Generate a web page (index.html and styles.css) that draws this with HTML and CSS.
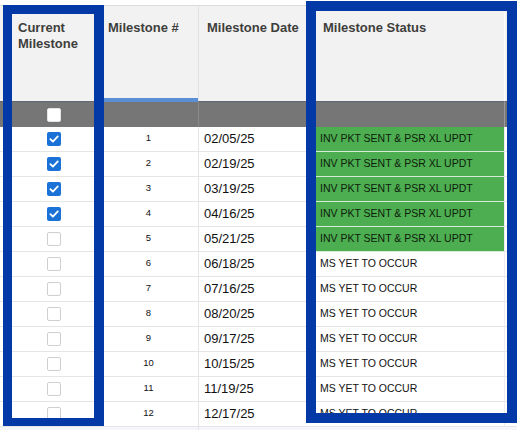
FILE: index.html
```html
<!DOCTYPE html>
<html>
<head>
<meta charset="utf-8">
<link rel="stylesheet" href="styles.css">
</head>
<body>
<div class="page">
  <div class="grid">
    <div class="hd c1">Current Milestone</div>
    <div class="hd c2 sorted">Milestone #</div>
    <div class="hd c3">Milestone Date</div>
    <div class="hd c4">Milestone Status</div>
    <div class="hd c5"></div>

    <div class="ft c1"><span class="cb blank"></span></div>
    <div class="ft c2 sorted"></div>
    <div class="ft c3"></div>
    <div class="ft c4"></div>
    <div class="ft c5"></div>
  </div>
  <div class="grid" id="rows"></div>
</div>
<div class="frame frame-left"></div>
<div class="frame frame-right"></div>
<script src="app.js"></script>
</body>
</html>
```
FILE: app.js
```js
const data = [
  [true, 1, "02/05/25", "INV PKT SENT & PSR XL UPDT", true],
  [true, 2, "02/19/25", "INV PKT SENT & PSR XL UPDT", true],
  [true, 3, "03/19/25", "INV PKT SENT & PSR XL UPDT", true],
  [true, 4, "04/16/25", "INV PKT SENT & PSR XL UPDT", true],
  [false, 5, "05/21/25", "INV PKT SENT & PSR XL UPDT", true],
  [false, 6, "06/18/25", "MS YET TO OCCUR", false],
  [false, 7, "07/16/25", "MS YET TO OCCUR", false],
  [false, 8, "08/20/25", "MS YET TO OCCUR", false],
  [false, 9, "09/17/25", "MS YET TO OCCUR", false],
  [false, 10, "10/15/25", "MS YET TO OCCUR", false],
  [false, 11, "11/19/25", "MS YET TO OCCUR", false],
  [false, 12, "12/17/25", "MS YET TO OCCUR", false]
];
const rows = document.getElementById("rows");
const check = '<svg viewBox="0 0 14 14" width="14" height="14"><path d="M3.4 7.2 L5.9 9.6 L10.8 4.4" fill="none" stroke="#fff" stroke-width="1.8" stroke-linecap="round" stroke-linejoin="round"/></svg>';
let html = "";
for (const [on, n, d, s, g] of data) {
  html += '<div class="td c1"><span class="cb ' + (on ? "on" : "off") + '">' + (on ? check : "") + '</span></div>';
  html += '<div class="td c2 num">' + n + '</div>';
  html += '<div class="td c3 date">' + d + '</div>';
  html += '<div class="td c4 status' + (g ? " green" : "") + '">' + s.replace(/&/g, "&amp;") + '</div>';
  html += '<div class="td c5"></div>';
}
html += '<div class="tail"></div><div class="tail"></div><div class="tail c3"></div><div class="tail"></div><div class="tail"></div>';
rows.innerHTML = html;
```
FILE: styles.css
```css
* { box-sizing: border-box; }
html, body { margin: 0; padding: 0; background: #fff; }
body {
  width: 517px;
  height: 430px;
  overflow: hidden;
  position: relative;
  font-family: "Liberation Sans", Arial, sans-serif;
  color: #181818;
}
.page { padding-top: 5px; }
.grid {
  display: grid;
  grid-template-columns: 99px 99px 115px 191px 13px;
}
.hd {
  height: 96px;
  background: #f3f2f2;
  border-top: 1px solid #dddbda;
  padding: 14px 9px 0 9px;
  font-weight: bold;
  font-size: 13px;
  line-height: 16px;
  color: #3e3e3c;
}
.hd.c1 { padding-left: 18px; padding-right: 4px; }
.hd.c4 { padding-left: 10px; }
.hd.c3 { border-left: 1px solid #e2e2e2; padding-left: 8px; }
.hd.c5 { border-left: 1px solid #fff; padding: 0; }
.hd.sorted { box-shadow: inset 0 -3px 0 #5b8fd3; }
.ft {
  height: 26px;
  background: #767676;
  border-top: 1px solid #5f6774;
  display: flex;
  align-items: center;
}
.ft.sorted { border-top-color: #5b8fd3; }
.ft.c3 { border-left: 1px solid #8a8a8a; }
.ft.c5 { border-left: 1px solid #9a9a9a; }
.ft.c1 { justify-content: center; padding-left: 9px; }
.cb {
  width: 14px;
  height: 14px;
  border-radius: 2px;
  display: block;
}
.cb svg { display: block; }
.cb.blank { background: #fff; border: 1px solid #e4e4e4; }
.cb.on { background: #1b72d6; }
.cb.off { background: #fff; border: 1px solid #cfcfcf; }
.td {
  height: 25px;
  border-bottom: 1px solid #e5e5e5;
  display: flex;
  align-items: center;
  background: #fff;
}
.td.c1 { justify-content: center; padding-left: 9px; }
.td.c3 { border-left: 1px solid #e5e5e5; }
.num {
  justify-content: center;
  font-size: 9.5px;
  padding-bottom: 3px;
  color: #111;
}
.date {
  font-size: 13px;
  padding-left: 5px;
  padding-bottom: 1px;
  color: #111;
}
.status {
  font-size: 10.5px;
  padding-left: 7px;
  padding-bottom: 3px;
  color: #111;
}
.status.green {
  background: #4cae50;
  border-bottom-color: #d6ecd6;
  color: #0e1a0b;
}
.td.c5 { border-left: 1px solid #eeeeee; }
.tail {
  height: 10px;
  background: #f4f6f9;
}
.tail.c3 { border-left: 1px solid #e5e5e5; }
.frame {
  position: absolute;
  border-style: solid;
  border-color: #0339a6;
}
.frame-left {
  left: 3px;
  top: 5px;
  width: 101px;
  height: 421px;
  border-width: 9px 10px 8px 9px;
}
.frame-right {
  left: 306px;
  top: 1px;
  width: 211px;
  height: 422px;
  border-width: 10px;
}
```
